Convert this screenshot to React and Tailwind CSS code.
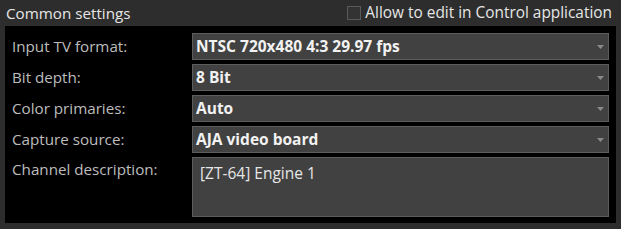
import React from "react";

const font = { fontFamily: '"Open Sans", "Noto Sans", sans-serif' };

function Arrow() {
  return (
    <svg width="7" height="4" viewBox="0 0 7 4" className="shrink-0">
      <polygon points="0,0 7,0 3.5,4" fill="#8a8a8a" />
    </svg>
  );
}

function Combo({ value }) {
  return (
    <div className="flex h-[27px] items-center justify-between border border-[#5c5c5c] bg-[#414141] pl-[3px] pr-[4px]">
      <span className="text-[15.5px] font-bold text-[#f2f2f2] leading-none">{value}</span>
      <Arrow />
    </div>
  );
}

export default function App() {
  const rows = [
    ["Input TV format:", "NTSC 720x480 4:3 29.97 fps"],
    ["Bit depth:", "8 Bit"],
    ["Color primaries:", "Auto"],
    ["Capture source:", "AJA video board"],
  ];
  return (
    <div style={font} className="w-[621px] h-[229px] bg-[#2d2d2d] px-[5px] pb-[6px] flex flex-col">
      <div className="flex h-[26px] items-center justify-between pl-[1px] pr-[4px]">
        <span className="text-[15.2px] text-[#e6e6e6]">Common settings</span>
        <div className="flex items-center gap-[4px]">
          <div className="w-[14px] h-[14px] border border-[#5a5a5a] bg-[#333333]" />
          <span className="text-[15.4px] text-[#e6e6e6]">Allow to edit in Control application</span>
        </div>
      </div>
      <div className="flex-1 bg-black pt-[7px] pl-[7px] pr-[7px] grid grid-cols-[180px_1fr] gap-y-[4px] content-start">
        {rows.map(([l, v]) => (
          <React.Fragment key={l}>
            <div className="flex items-center h-[27px] text-[15.2px] text-[#bdbdbd]">{l}</div>
            <Combo value={v} />
          </React.Fragment>
        ))}
        <div className="text-[15.2px] text-[#bdbdbd] pt-[1px] leading-[22px]">Channel description:</div>
        <div className="h-[60px] border border-[#5c5c5c] bg-[#414141] px-[7px] pt-[4px] text-[15.5px] text-[#e6e6e6]">
          [ZT-64] Engine 1
        </div>
      </div>
    </div>
  );
}
